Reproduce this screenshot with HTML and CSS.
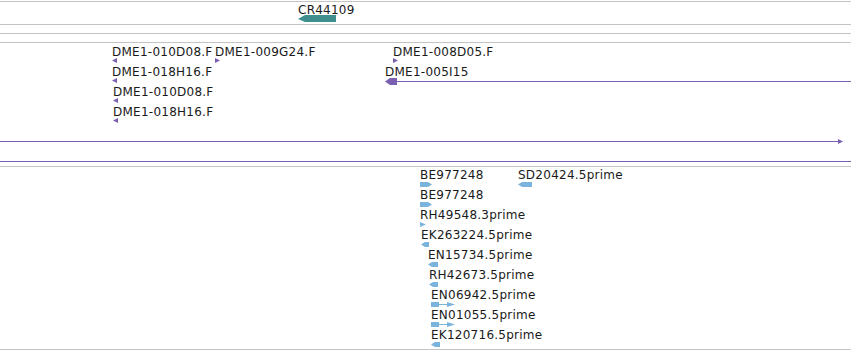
FILE: index.html
```html
<!doctype html>
<html lang="en">
<head>
    <meta charset="UTF-8">
    <title>Tracks</title>
    <link rel="stylesheet" href="styles.css">
</head>
<body>
<div class="tracks">
    <!-- gene track -->
    <div class="track t-gene">
        <div class="feat" style="left:298px;top:0px">
            <span class="label">CR44109</span>
            <svg class="glyph gene" width="38" height="7"><polygon points="0,4 7,0 38,0 38,7 7,7"/></svg>
        </div>
    </div>
    <div class="track t-empty"></div>
    <div class="track t-empty"></div>

    <!-- clone ends -->
    <div class="track t-clone">
        <div class="feat" style="left:112px;top:1px">
            <span class="label">DME1-010D08.F</span>
            <svg class="glyph" width="5" height="5"><polygon points="0,2.5 5,0 5,5"/></svg>
        </div>
        <div class="feat" style="left:215px;top:1px">
            <span class="label">DME1-009G24.F</span>
            <svg class="glyph" width="5" height="5"><polygon points="0,0 5,2.5 0,5"/></svg>
        </div>
        <div class="feat" style="left:393px;top:1px">
            <span class="label">DME1-008D05.F</span>
            <svg class="glyph" width="5" height="5"><polygon points="0,0 5,2.5 0,5"/></svg>
        </div>
        <div class="feat" style="left:112px;top:21px">
            <span class="label">DME1-018H16.F</span>
            <svg class="glyph" width="5" height="5"><polygon points="0,2.5 5,0 5,5"/></svg>
        </div>
        <div class="feat" style="left:113px;top:41px">
            <span class="label">DME1-010D08.F</span>
            <svg class="glyph" width="5" height="5"><polygon points="0,2.5 5,0 5,5"/></svg>
        </div>
        <div class="feat" style="left:113px;top:61px">
            <span class="label">DME1-018H16.F</span>
            <svg class="glyph" width="5" height="5"><polygon points="0,2.5 5,0 5,5"/></svg>
        </div>
        <div class="feat" style="left:385px;top:21px">
            <span class="label">DME1-005I15</span>
            <svg class="glyph" width="466" height="7"><polygon points="0,3.5 5,0 12,0 12,7 5,7"/><rect x="12" y="3" width="454" height="1"/></svg>
        </div>
        <div class="feat" style="left:0px;top:96px">
            <svg class="glyph" width="843" height="5"><rect x="0" y="2" width="838" height="1"/><polygon points="838,0 843,2.5 838,5"/></svg>
        </div>
        <div class="feat" style="left:0px;top:118px">
            <svg class="glyph" width="851" height="1"><rect x="0" y="0" width="851" height="1"/></svg>
        </div>
    </div>

    <!-- ESTs -->
    <div class="track t-est">
        <div class="feat" style="left:420px;top:0px">
            <span class="label">BE977248</span>
            <svg class="glyph" width="12" height="5"><polygon points="0,0 8,0 12,2.5 8,5 0,5"/></svg>
        </div>
        <div class="feat" style="left:518px;top:0px">
            <span class="label">SD20424.5prime</span>
            <svg class="glyph" width="14" height="5"><polygon points="0,2.5 4,0 14,0 14,5 4,5"/></svg>
        </div>
        <div class="feat" style="left:420px;top:20px">
            <span class="label">BE977248</span>
            <svg class="glyph" width="12" height="5"><polygon points="0,0 8,0 12,2.5 8,5 0,5"/></svg>
        </div>
        <div class="feat" style="left:420px;top:40px">
            <span class="label">RH49548.3prime</span>
            <svg class="glyph" width="6" height="5"><polygon points="0,0 6,2.5 0,5"/></svg>
        </div>
        <div class="feat" style="left:421px;top:60px">
            <span class="label">EK263224.5prime</span>
            <svg class="glyph" width="8" height="5"><polygon points="0,2.5 4,0 8,0 8,5 4,5"/></svg>
        </div>
        <div class="feat" style="left:428px;top:80px">
            <span class="label">EN15734.5prime</span>
            <svg class="glyph" width="10" height="5"><polygon points="0,2.5 4,0 10,0 10,5 4,5"/></svg>
        </div>
        <div class="feat" style="left:429px;top:100px">
            <span class="label">RH42673.5prime</span>
            <svg class="glyph" width="9" height="5"><polygon points="0,2.5 4,0 9,0 9,5 4,5"/></svg>
        </div>
        <div class="feat" style="left:431px;top:120px">
            <span class="label">EN06942.5prime</span>
            <svg class="glyph" width="24" height="5"><rect x="0" y="0" width="8" height="5"/><rect x="8" y="2" width="9" height="1"/><polygon points="16,0 24,2.5 16,5"/></svg>
        </div>
        <div class="feat" style="left:431px;top:140px">
            <span class="label">EN01055.5prime</span>
            <svg class="glyph" width="24" height="5"><rect x="0" y="0" width="8" height="5"/><rect x="8" y="2" width="9" height="1"/><polygon points="16,0 24,2.5 16,5"/></svg>
        </div>
        <div class="feat" style="left:431px;top:160px">
            <span class="label">EK120716.5prime</span>
            <svg class="glyph" width="9" height="5"><polygon points="0,2.5 4,0 9,0 9,5 4,5"/></svg>
        </div>
    </div>
</div>
</body>
</html>
```

FILE: styles.css
```css
body{ margin:0; padding:0; background:#fff; font-family:"DejaVu Sans", Verdana, sans-serif; font-size:12px; color:#1a1a1a;}
.tracks{ padding-top:1px; width:851px; overflow:hidden;}
.track{ position:relative; border-top:1px solid #c4c4c4;}
.track:last-child{ border-bottom:1px solid #c4c4c4;}
.t-gene{ height:22px;}
.t-empty{ height:8px;}
.t-clone{ height:123px;}
.t-est{ height:182px;}

.feat{ position:absolute; display:flex; flex-direction:column; align-items:flex-start;}
.feat .label{ display:block; padding-top:2px; line-height:12px; letter-spacing:0.25px; white-space:nowrap;}
.feat .glyph{ display:block;}
.t-gene .glyph{ margin-top:-1px;}
.t-clone .glyph{ fill:#7a5fb3; margin-top:0;}
.t-est .glyph{ fill:#7ab4dc; margin-top:1px;}
.gene{ fill:#3f8f8f;}
```
